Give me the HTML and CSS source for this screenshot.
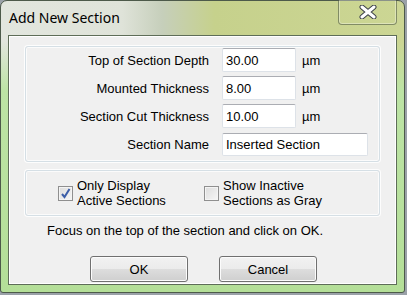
FILE: index.html
```
<!DOCTYPE html>
<html lang="en">

<head>
    <meta charset="UTF-8">
    <title>Add New Section</title>
    <link rel="stylesheet" href="styles.css">
</head>

<body>
    <div class="window">
        <div class="titlebar">
            <span class="title">Add New Section</span>
            <div class="close-btn">
                <svg width="22" height="14" viewBox="0 0 22 14">
                    <path d="M5 2 L17 12 M17 2 L5 12" stroke="#3a3f48" stroke-width="5" stroke-linecap="round" />
                    <path d="M5 2 L17 12 M17 2 L5 12" stroke="#ffffff" stroke-width="3" stroke-linecap="round" />
                </svg>
            </div>
        </div>

        <div class="client">
            <div class="group fields">
                <label>Top of Section Depth</label>
                <input type="text" value="30.00">
                <span class="unit">&micro;m</span>

                <label>Mounted Thickness</label>
                <input type="text" value="8.00">
                <span class="unit">&micro;m</span>

                <label>Section Cut Thickness</label>
                <input type="text" value="10.00">
                <span class="unit">&micro;m</span>

                <label>Section Name</label>
                <input type="text" class="wide" value="Inserted Section">
            </div>

            <div class="group options">
                <div class="check-item">
                    <span class="box checked">
                        <svg width="11" height="11" viewBox="0 0 11 11">
                            <path d="M2 6 L4.5 9 L9.5 1" fill="none" stroke="#3c5ea8" stroke-width="2" />
                        </svg>
                    </span>
                    <span class="check-text">Only Display<br>Active Sections</span>
                </div>
                <div class="check-item">
                    <span class="box"></span>
                    <span class="check-text">Show Inactive<br>Sections as Gray</span>
                </div>
            </div>

            <div class="hint">Focus on the top of the section and click on OK.</div>

            <div class="buttons">
                <button>OK</button>
                <button>Cancel</button>
            </div>
        </div>
    </div>
</body>

</html>
```

FILE: styles.css
```
body {
    margin: 0;
    background-color: #9aa1a8;
    font-family: "Liberation Sans", Arial, sans-serif;
    font-size: 13px;
    color: #000;
}

.window {
    position: relative;
    width: 403px;
    height: 291px;
    border: 1px solid #4d5a4a;
    border-radius: 7px 7px 3px 3px;
    background:
        linear-gradient(to bottom, rgba(190, 228, 170, 0) 0, rgba(190, 228, 170, 0) 40px, #bde4a5 90px, #b4df98 100%),
        linear-gradient(to right, #e2e6de 0, #dfe3d9 30%, #c6cfbb 40%, #c6d18c 53%, #ccd694 100%);
}

.titlebar {
    height: 34px;
    display: flex;
    align-items: flex-start;
    justify-content: space-between;
}

.title {
    font-family: "Noto Sans", sans-serif;
    font-size: 14px;
    color: #000;
    margin: 7px 0 0 8px;
}

.close-btn {
    width: 57px;
    height: 24px;
    margin: -1px 7px 0 0;
    border: 1px solid rgba(80, 90, 70, 0.6);
    border-top: none;
    border-radius: 0 0 4px 4px;
    display: flex;
    justify-content: center;
    align-items: center;
    box-shadow: inset 0 0 0 1px rgba(255, 255, 255, 0.35);
}

.client {
    margin: 0 7px;
    height: 248px;
    background-color: #f0f0f0;
    border: 1px solid #5e6d58;
    box-shadow: inset 0 0 0 1px #ffffff;
}

.group {
    margin: 10px 16px 0;
    border: 1px solid #d5dfe5;
    border-radius: 3px;
    box-shadow: inset 0 0 0 1px #fbfbfb, 0 0 0 1px #fdfdfd;
}

.fields {
    display: grid;
    grid-template-columns: 183px 74px auto;
    grid-auto-rows: 24px;
    column-gap: 13px;
    row-gap: 4px;
    padding: 1px 0 5px;
    align-items: center;
}

.fields label {
    text-align: right;
}

.fields input {
    width: 74px;
    height: 24px;
    box-sizing: border-box;
    margin: 0;
    padding: 0 3px;
    border: 1px solid #dde2e8;
    border-top-color: #abadb3;
    border-radius: 2px;
    background: #fff;
    font-family: "Liberation Sans", Arial, sans-serif;
    font-size: 13px;
}

.fields input.wide {
    grid-column: 2 / 4;
    width: 146px;
    height: 23px;
    margin-top: 1px;
}

.fields .unit {
    margin-left: -7px;
}

.options {
    margin-top: 8px;
    height: 44px;
    display: flex;
    align-items: center;
    padding-left: 32px;
}

.check-item {
    display: flex;
    align-items: center;
    width: 146px;
}

.box {
    width: 13px;
    height: 13px;
    border: 1px solid #8f8f8f;
    background: linear-gradient(135deg, #dcdcdc, #f6f6f6);
    box-shadow: inset 0 0 0 1px #f4f4f4;
    margin-right: 4px;
    display: flex;
    justify-content: center;
    align-items: center;
}

.check-text {
    line-height: 15px;
}

.hint {
    margin: 7px 0 0 38px;
    height: 16px;
}

.buttons {
    display: flex;
    gap: 31px;
    margin: 17px 0 0 81px;
}

.buttons button {
    width: 98px;
    height: 26px;
    border: 1px solid #707070;
    border-radius: 3px;
    background: linear-gradient(to bottom, #f2f2f2 0%, #ebebeb 50%, #dddddd 51%, #cfcfcf 100%);
    box-shadow: inset 0 0 0 1px #fcfcfc;
    font-family: "Liberation Sans", Arial, sans-serif;
    font-size: 13px;
    color: #000;
    padding: 0;
}
```
